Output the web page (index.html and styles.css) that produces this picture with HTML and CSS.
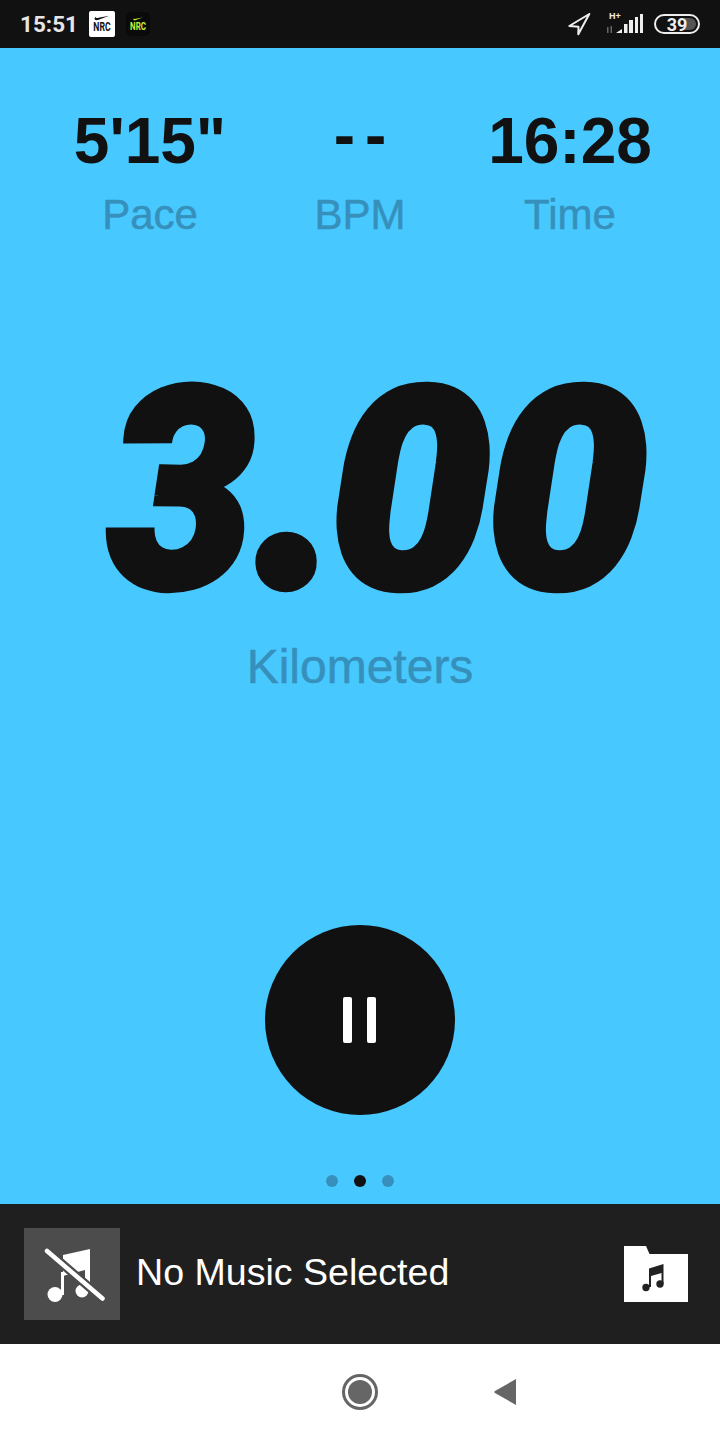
FILE: index.html
```html
<!DOCTYPE html>
<html lang="en">
<head>
    <meta charset="UTF-8">
    <meta name="viewport" content="width=device-width, initial-scale=1.0">
    <title>Nike Run Club</title>
    <link rel="stylesheet" href="styles.css">
</head>
<body>
    <div class="status-bar">
        <div class="status-left">
            <span class="clock">15:51</span>
            <div class="app-badge badge-white">
                <svg class="swoosh" viewBox="0 0 24 9"><path d="M23 1 L7 7 C3 8.500 0 7.500 1 5 C1.500 4 2 3.500 3 2.500 C2.500 4.500 4 5 7 4 Z" fill="#111"/></svg>
                <span class="badge-text">NRC</span>
            </div>
            <div class="app-badge badge-dark">
                <svg class="swoosh" viewBox="0 0 24 9"><path d="M23 1 L7 7 C3 8.500 0 7.500 1 5 C1.500 4 2 3.500 3 2.500 C2.500 4.500 4 5 7 4 Z" fill="#c6f135"/></svg>
                <span class="badge-text">NRC</span>
            </div>
        </div>
        <div class="status-right">
            <svg class="location" width="24" height="24" viewBox="0 0 24 24"><path d="M22.300 2 L2.300 14 L11.500 14.800 L11.300 22.300 Z" fill="none" stroke="#eee" stroke-width="2" stroke-linejoin="round"/></svg>
            <svg class="signal" width="40" height="24" viewBox="0 0 40 24">
                <text x="5" y="7" class="signal-type">H+</text>
                <path d="M3 15 h1.500 v6 h-1.500z M6.500 14 h1.500 v7 h-1.500z" fill="#666"/>
                <path d="M12 21 l6 -4 v4z M20 12 h3.500 v9 h-3.500z M25 8 h4 v13 h-4z M31 5 h3 v16 h-3z M36 2 h3 v19 h-3z" fill="#eee"/>
            </svg>
            <div class="battery">
                <div class="battery-level"></div>
                <span class="battery-text">39</span>
            </div>
        </div>
    </div>

    <main class="run-screen">
        <div class="stats">
            <div class="stat">
                <div class="stat-value">5'15"</div>
                <div class="stat-label">Pace</div>
            </div>
            <div class="stat">
                <div class="stat-value stat-dashes">--</div>
                <div class="stat-label">BPM</div>
            </div>
            <div class="stat">
                <div class="stat-value">16:28</div>
                <div class="stat-label">Time</div>
            </div>
        </div>

        <div class="distance"><span class="distance-three">3</span><span class="distance-dot">.</span><span class="distance-zero">0</span>0</div>
        <div class="distance-label">Kilometers</div>

        <button class="pause-button">
            <span class="pause-bar"></span>
            <span class="pause-bar"></span>
        </button>

        <div class="dots">
            <span class="dot"></span>
            <span class="dot dot-active"></span>
            <span class="dot"></span>
        </div>
    </main>

    <div class="music-bar">
        <div class="album">
            <svg width="96" height="92" viewBox="0 0 96 92">
                <path d="M39 27 L66 21 V60 H61 V42 L39 48 Z" fill="#fff"/>
                <circle cx="58" cy="63" r="6.500" fill="#fff"/>
                <path d="M37 44 H40 V67 H37 Z" fill="#fff"/>
                <circle cx="31" cy="66.500" r="7.500" fill="#fff"/>
                <path d="M22 22 L79.300 71.300" stroke="#4c4c4c" stroke-width="9"/>
                <path d="M23 23 L78.500 70.500" stroke="#fff" stroke-width="4.500" stroke-linecap="round"/>
            </svg>
        </div>
        <div class="music-title">No Music Selected</div>
        <svg class="folder" width="64" height="56" viewBox="0 0 64 56">
            <path d="M0 0 H22 L25.500 8 H64 V56 H0 Z" fill="#fff"/>
            <path d="M25 22.500 L39.500 18 V38 H37.500 V27 L27 30 V41 H25 Z" fill="#222"/>
            <circle cx="22" cy="41.500" r="3.700" fill="#222"/>
            <circle cx="36" cy="38" r="3.700" fill="#222"/>
        </svg>
    </div>

    <div class="nav-bar">
        <div class="nav-home"><div class="nav-home-inner"></div></div>
        <svg class="nav-back" width="24" height="28" viewBox="0 0 24 28"><path d="M23 1 V27 L2 15 Q0.500 14 2 13 Z" fill="#666"/></svg>
    </div>
</body>
</html>
```

FILE: styles.css
```css
html, body {
    margin: 0;
    padding: 0;
}
body {
    width: 720px;
    height: 1440px;
    display: flex;
    flex-direction: column;
    font-family: "Liberation Sans", Arial, sans-serif;
    background-color: #fff;
    overflow: hidden;
}
.status-bar {
    height: 48px;
    background-color: #111;
    display: flex;
    align-items: center;
    justify-content: space-between;
    padding: 0 20px;
}
.status-left {
    display: flex;
    align-items: center;
}
.clock {
    font-family: Roboto, sans-serif;
    font-weight: 700;
    font-size: 22.500px;
    color: #e6e6e6;
    width: 69px;
}
.app-badge {
    width: 26px;
    height: 26px;
    border-radius: 2px;
    display: flex;
    flex-direction: column;
    align-items: center;
    justify-content: center;
    margin-right: 11px;
}
.badge-white {
    background-color: #fff;
    color: #111;
}
.badge-dark {
    width: 24px;
    height: 24px;
    background-color: #0a0a0a;
    border-radius: 5px;
    color: #c6f135;
}
.swoosh {
    width: 16px;
    height: 6px;
}
.badge-dark .swoosh {
    width: 10px;
    height: 4px;
}
.badge-text {
    font-family: Roboto, sans-serif;
    font-weight: 700;
    font-size: 12px;
    line-height: 11px;
    margin-top: 1px;
    transform: scaleX(0.72);
}
.badge-dark .badge-text {
    font-size: 11px;
    line-height: 10px;
}
.status-right {
    display: flex;
    align-items: center;
}
.location {
    margin-right: 13px;
}
.signal {
    margin-right: 10px;
}
.signal-type {
    font-family: "Liberation Sans", sans-serif;
    font-weight: 700;
    font-size: 9px;
    fill: #eee;
}
.battery {
    position: relative;
    width: 42px;
    height: 16px;
    border: 2px solid #eee;
    border-radius: 10px;
    display: flex;
    align-items: center;
    justify-content: center;
    overflow: hidden;
}
.battery-level {
    position: absolute;
    right: 2px;
    top: 2px;
    bottom: 2px;
    width: 12px;
    background-color: #555;
    border-radius: 0 6px 6px 0;
}
.battery-text {
    position: relative;
    font-family: Roboto, sans-serif;
    font-weight: 700;
    font-size: 18px;
    color: #eee;
}
.run-screen {
    height: 1156px;
    background-color: #47c8ff;
    display: flex;
    flex-direction: column;
    align-items: center;
    position: relative;
}
.stats {
    width: 630px;
    margin-top: 57px;
    display: grid;
    grid-template-columns: repeat(3, 210px);
    text-align: center;
}
.stat-value {
    font-weight: 700;
    font-size: 64px;
    line-height: 72px;
    color: #111;
}
.stat-dashes {
    line-height: 60px;
    padding-bottom: 12px;
    letter-spacing: 10px;
    padding-left: 10px;
}
.stat-label {
    font-size: 42px;
    line-height: 48px;
    margin-top: 14px;
    color: #3690bb;
    -webkit-text-stroke: 0.500px #3690bb;
}
.distance {
    font-family: Roboto, sans-serif;
    font-weight: 900;
    font-style: italic;
    font-size: 286px;
    line-height: 230px;
    margin-top: 138px;
    padding-left: 23px;
    color: #111;
    -webkit-text-stroke: 8px #111;
    letter-spacing: -10px;
    transform: scaleY(0.975);
}
.distance-three {
    display: inline-block;
    transform: scaleX(0.91);
    transform-origin: 0 50%;
    margin-left: 2px;
    margin-right: -3px;
}
.distance-dot {
    display: inline-block;
    transform: scale(1.05, 1.12);
    transform-origin: 50% 94%;
}
.distance-zero {
    letter-spacing: -4px;
}
.distance-label {
    font-size: 48px;
    line-height: 54px;
    margin-top: 33px;
    color: #3690bb;
    -webkit-text-stroke: 0.500px #3690bb;
}
.pause-button {
    width: 190px;
    height: 190px;
    margin-top: 231px;
    border: none;
    border-radius: 50%;
    background-color: #111;
    display: flex;
    align-items: center;
    justify-content: center;
    gap: 15px;
    padding: 0 2px 0 0;
}
.pause-bar {
    width: 9px;
    height: 46px;
    border-radius: 2px;
    background-color: #fff;
}
.dots {
    display: flex;
    gap: 16px;
    margin-top: 60px;
}
.dot {
    width: 12px;
    height: 12px;
    border-radius: 50%;
    background-color: #3690bb;
}
.dot-active {
    background-color: #111;
}
.music-bar {
    height: 140px;
    background-color: #1f1f1f;
    display: flex;
    align-items: center;
    padding: 0 32px 0 24px;
}
.album {
    width: 96px;
    height: 92px;
    background-color: #4c4c4c;
    margin-right: 16px;
}
.music-title {
    font-weight: 400;
    font-size: 37.600px;
    padding-bottom: 3px;
    color: #fff;
    flex: 1;
}
.nav-bar {
    height: 96px;
    background-color: #fff;
    display: flex;
    align-items: center;
    padding-left: 342px;
    gap: 115px;
}
.nav-home {
    width: 36px;
    height: 36px;
    border: 3px solid #666;
    border-radius: 50%;
    box-sizing: border-box;
    padding: 3px;
}
.nav-home-inner {
    width: 100%;
    height: 100%;
    border-radius: 50%;
    background-color: #666;
}
```
